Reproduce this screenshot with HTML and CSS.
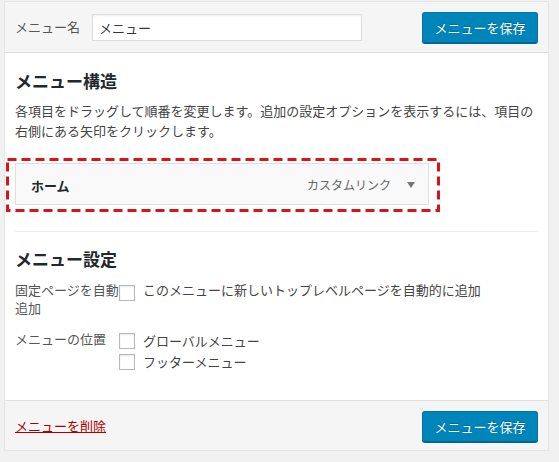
FILE: index.html
```html
<!DOCTYPE html>
<html lang="ja">
<head>
<meta charset="utf-8">
<title>メニュー</title>
<link rel="stylesheet" href="styles.css">
</head>
<body>
<div class="panel">
  <div class="panel-header">
    <div class="name-field">
      <label class="name-label" for="menu-name">メニュー名</label>
      <input class="name-input" id="menu-name" type="text" value="メニュー">
    </div>
    <button class="btn-primary" type="button">メニューを保存</button>
  </div>

  <div class="panel-body">
    <h3 class="section-title">メニュー構造</h3>
    <p class="section-desc">各項目をドラッグして順番を変更します。追加の設定オプションを表示するには、項目の<br>右側にある矢印をクリックします。</p>

    <div class="menu-item">
      <span class="item-title">ホーム</span>
      <span class="item-controls">
        <span class="item-type">カスタムリンク</span>
        <span class="item-arrow"></span>
      </span>
      <svg class="highlight" aria-hidden="true"><rect class="highlight-rect"></rect></svg>
    </div>

    <hr class="divider">

    <h3 class="section-title settings-title">メニュー設定</h3>
    <div class="settings">
      <div class="settings-row">
        <div class="settings-label">固定ページを自動<br>追加</div>
        <div class="settings-options">
          <div class="option first-option">
            <span class="checkbox"></span>
            <span class="option-text">このメニューに新しいトップレベルページを自動的に追加</span>
          </div>
        </div>
      </div>
      <div class="settings-row location-row">
        <div class="settings-label">メニューの位置</div>
        <div class="settings-options">
          <div class="option">
            <span class="checkbox"></span>
            <span class="option-text">グローバルメニュー</span>
          </div>
          <div class="option">
            <span class="checkbox"></span>
            <span class="option-text">フッターメニュー</span>
          </div>
        </div>
      </div>
    </div>
  </div>

  <div class="panel-footer">
    <a class="delete-link" href="#">メニューを削除</a>
    <button class="btn-primary" type="button">メニューを保存</button>
  </div>
</div>
</body>
</html>
```

FILE: styles.css
```css
* { box-sizing: border-box; }

body {
  margin: 0;
  background: #f1f1f1;
  font-family: "Noto Sans CJK JP", "Noto Sans", sans-serif;
  font-size: 13px;
  color: #444;
}

.panel {
  margin: 1px 0 0 4px;
  width: 545px;
  border: 1px solid #e5e5e5;
  background: #fff;
}

.panel-header {
  height: 51px;
  background: #f5f5f5;
  border-bottom: 1px solid #dfdfdf;
  display: flex;
  align-items: center;
  justify-content: space-between;
  padding: 0 10px;
}

.name-field {
  display: flex;
  align-items: center;
}

.name-label {
  color: #555;
  width: 77px;
  line-height: 18px;
}

.name-input {
  width: 270px;
  height: 27px;
  border: 1px solid #ddd;
  background: #fff;
  box-shadow: inset 0 1px 2px rgba(0, 0, 0, 0.07);
  padding: 0 6px;
  font: inherit;
  font-size: 13px;
  color: #32373c;
  margin: 1px 0 0;
  outline: none;
}

.btn-primary {
  width: 116px;
  height: 31px;
  padding: 0;
  border: 1px solid #0073aa;
  border-bottom-color: #006799;
  border-radius: 3px;
  background: #0085ba;
  box-shadow: 0 1px 0 #006799;
  color: #fff;
  font: inherit;
  font-size: 13px;
  line-height: 29px;
  text-shadow: 0 -1px 1px #006799;
  margin-top: 1px;
}

.panel-body {
  padding: 0 10px 28px;
}

.section-title {
  margin: 16px 0 8px;
  font-size: 17px;
  line-height: 24px;
  font-weight: 700;
  color: #23282d;
}

.section-desc {
  margin: 0;
  line-height: 19.5px;
  color: #444;
}

.menu-item {
  position: relative;
  margin-top: 23px;
  width: 414px;
  height: 42px;
  border: 1px solid #dfdfdf;
  background: #f9f9f9;
  display: flex;
  align-items: center;
  justify-content: space-between;
  padding: 0 13px 0 15px;
}

.item-title {
  font-weight: 700;
  color: #23282d;
  font-size: 13px;
  margin-top: 2px;
}

.item-controls {
  display: flex;
  align-items: center;
}

.item-type {
  font-size: 12px;
  color: #666;
  margin-right: 16px;
}

.item-arrow {
  width: 0;
  height: 0;
  border-left: 4px solid transparent;
  border-right: 4px solid transparent;
  border-top: 6px solid #72777c;
  margin-top: 1px;
}

.highlight {
  position: absolute;
  left: -10px;
  top: -6px;
  width: 434px;
  height: 54px;
  overflow: visible;
  pointer-events: none;
}

.highlight-rect {
  x: 1.5px;
  y: 1.5px;
  width: 431px;
  height: 51px;
  fill: none;
  stroke: #d7141a;
  stroke-width: 3px;
  stroke-dasharray: 9 5;
}

.divider {
  margin: 26px 0 0;
  border: 0;
  border-top: 1px solid #eee;
  height: 0;
}

.settings-title {
  margin-top: 15px;
  margin-bottom: 10px;
}

.settings-row {
  display: grid;
  grid-template-columns: 104px 1fr;
  line-height: 18px;
}

.settings-label {
  color: #555;
}

.location-row {
  margin-top: 13px;
}

.option {
  display: flex;
  align-items: center;
  height: 21px;
}

.first-option {
  align-items: flex-start;
  height: auto;
}

.first-option .checkbox {
  margin-top: 4px;
}

.checkbox {
  flex: none;
  width: 16px;
  height: 16px;
  border: 1px solid #b4b9be;
  background: #fff;
  box-shadow: inset 0 1px 2px rgba(0, 0, 0, 0.1);
  margin-right: 8px;
}

.option-text {
  color: #444;
}

.panel-footer {
  height: 50px;
  background: #f5f5f5;
  border-top: 1px solid #dfdfdf;
  display: flex;
  align-items: center;
  justify-content: space-between;
  padding: 0 10px;
}

.delete-link {
  color: #a00;
  text-decoration: underline;
  font-size: 13px;
  margin-top: -1px;
}
```
